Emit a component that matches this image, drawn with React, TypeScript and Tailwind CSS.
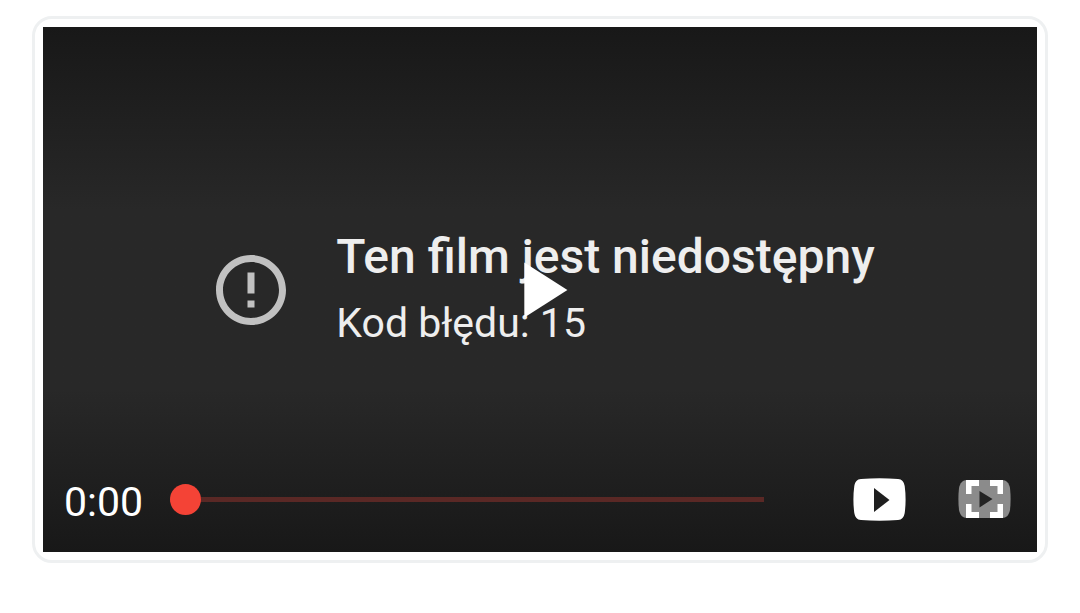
import {useState} from "react";

function ErrorIcon() {
    return (
        <svg aria-hidden="true" className="shrink-0 size-[84px] text-[#c1c1c1]" fill="currentColor" viewBox="0 0 24 24">
            <path d="M11 15h2v2h-2zm0-8h2v6h-2zm.99-5C6.47 2 2 6.48 2 12s4.47 10 9.99 10C17.52 22 22 17.52 22 12S17.52 2 11.99 2zM12 20c-4.42 0-8-3.58-8-8s3.58-8 8-8 8 3.58 8 8-3.58 8-8 8z" />
        </svg>
    );
}

function YoutubeIcon() {
    return (
        <svg aria-hidden="true" className="w-[53px] h-[43px]" viewBox="0 0 53 43">
            <path
                d="M8 1Q26.500-.4 45 1C49 1.300 50.800 3.500 51.700 8Q53.500 21.500 51.700 35C50.800 39.500 49 41.700 45 42Q26.500 43.400 8 42C4 41.700 2.200 39.500 1.300 35Q-.5 21.500 1.300 8C2.200 3.500 4 1.300 8 1Z"
                fill="#fff"
            />
            <path d="M21 10v24l15.500-12z" fill="#1f1f1f" />
        </svg>
    );
}

function FullscreenIcon() {
    return (
        <svg aria-hidden="true" className="w-[53px] h-[38px]" viewBox="0 0 53 38">
            <path
                d="M9 0H44C48.500 0 51 3 52 8Q53.200 19 52 30C51 35 48.500 38 44 38H9C4.500 38 2 35 1 30Q-.2 19 1 8C2 3 4.500 0 9 0Z"
                fill="#8b8b8b"
            />
            <path d="M21.500 11v16.500L34.500 19z" fill="#222" />
            <path
                d="M8 0h13v6h-7.500v8H8zM32 0h13v14h-5.500V6H32zM8 24h5.500v8H21v6H8zM39.500 24H45v14H32v-6h7.500z"
                fill="#fff"
            />
        </svg>
    );
}

export default function App() {
    const [progress, setProgress] = useState(0);

    return (
        <main className="min-h-screen px-8 py-4 bg-white font-['Roboto',sans-serif]">
            <div className="p-2 border-3 border-[#eef0f1] rounded-[20px]">
                <section
                    aria-label="YouTube"
                    className="relative w-full aspect-[994/525] flex items-center justify-center overflow-hidden bg-linear-to-b from-[#181818] via-[#282828] via-35% to-[#282828] to-70%"
                >
                    <div className="flex items-center gap-[43px] pl-1">
                        <ErrorIcon />
                        <div className="text-[#eee]">
                            <h1 className="text-5xl leading-[67px] font-medium">Ten film jest niedostępny</h1>
                            <p className="text-[41px] leading-[67px]">Kod błędu: 15</p>
                        </div>
                    </div>

                    <div className="absolute inset-0 flex items-center justify-center">
                        <button aria-label="Odtwórz" className="cursor-pointer" type="button">
                            <svg className="size-[94px]" fill="#fff" viewBox="0 0 24 24">
                                <path d="M8 5v14l11-7z" />
                            </svg>
                        </button>
                    </div>

                    <div className="absolute inset-x-0 bottom-0 flex items-center pt-20 pb-6 pl-[21px] pr-[26px] bg-linear-to-b from-transparent to-[#181818]">
                        <span className="pt-1.5 text-[41px] leading-[52px] text-white">0:00</span>
                        <input
                            aria-label="Postęp"
                            className="flex-1 min-w-0 h-[31px] ml-[27px] mr-[89px] appearance-none cursor-pointer bg-transparent [&::-webkit-slider-runnable-track]:h-[5px] [&::-webkit-slider-runnable-track]:bg-[#5a2825] [&::-webkit-slider-thumb]:appearance-none [&::-webkit-slider-thumb]:size-[31px] [&::-webkit-slider-thumb]:-mt-[13px] [&::-webkit-slider-thumb]:rounded-full [&::-webkit-slider-thumb]:bg-[#f44336]"
                            max={100}
                            min={0}
                            type="range"
                            value={progress}
                            onChange={(e) => setProgress(Number(e.target.value))}
                        />
                        <div className="flex items-center gap-[52px]">
                            <button aria-label="Obejrzyj w YouTube" className="cursor-pointer" type="button">
                                <YoutubeIcon />
                            </button>
                            <button aria-label="Pełny ekran" className="cursor-pointer" type="button">
                                <FullscreenIcon />
                            </button>
                        </div>
                    </div>
                </section>
            </div>
        </main>
    );
}
